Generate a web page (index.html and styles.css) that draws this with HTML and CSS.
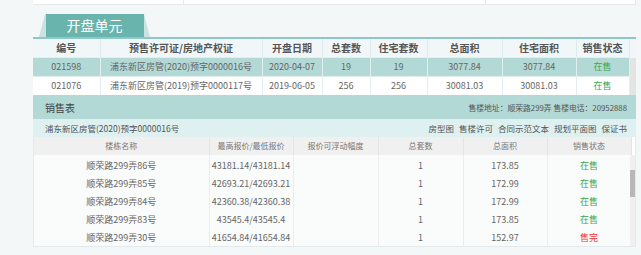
FILE: index.html
```html
<!DOCTYPE html>
<html lang="zh-CN">
<head>
  <meta charset="UTF-8">
  <title>开盘单元</title>
  <link rel="stylesheet" href="styles.css">
</head>
<body>
  <div class="page">
    <div class="topbox">
      <div class="cell c1"></div>
      <div class="cell c2"></div>
      <div class="cell c3"></div>
    </div>

    <div class="tabs">
      <div class="tab"><span>开盘单元</span></div>
    </div>

    <div class="units">
      <table class="unit-table">
        <colgroup>
          <col style="width:67px"><col style="width:162px"><col style="width:60px"><col style="width:48px">
          <col style="width:57px"><col style="width:75px"><col style="width:74px"><col style="width:53px"><col style="width:7px">
        </colgroup>
        <thead>
          <tr><th>编号</th><th>预售许可证/房地产权证</th><th>开盘日期</th><th>总套数</th><th>住宅套数</th><th>总面积</th><th>住宅面积</th><th>销售状态</th><th class="sb"></th></tr>
        </thead>
        <tbody>
          <tr class="active"><td>021598</td><td>浦东新区房管(2020)预字0000016号</td><td>2020-04-07</td><td>19</td><td>19</td><td>3077.84</td><td>3077.84</td><td class="on">在售</td><td class="sb"></td></tr>
          <tr><td>021076</td><td>浦东新区房管(2019)预字0000117号</td><td>2019-06-05</td><td>256</td><td>256</td><td>30081.03</td><td>30081.03</td><td class="on">在售</td><td class="sb"></td></tr>
        </tbody>
      </table>

      <div class="sales-head">
        <span class="title">销售表</span>
        <span class="info">售楼地址：顺荣路299弄 售楼电话：20952888</span>
      </div>
      <div class="sales-sub">
        <span>浦东新区房管(2020)预字0000016号</span>
        <span class="links"><a>房型图</a><a>售楼许可</a><a>合同示范文本</a><a>规划平面图</a><a>保证书</a></span>
      </div>

      <div class="sales-wrap">
        <table class="sales-table">
          <colgroup>
            <col style="width:175px"><col style="width:84px"><col style="width:85px"><col style="width:85px"><col style="width:84px"><col style="width:84px">
          </colgroup>
          <thead>
            <tr><th>楼栋名称</th><th>最高报价/最低报价</th><th>报价可浮动幅度</th><th>总套数</th><th>总面积</th><th>销售状态</th></tr>
          </thead>
          <tbody>
            <tr><td>顺荣路299弄86号</td><td>43181.14/43181.14</td><td></td><td>1</td><td>173.85</td><td class="on">在售</td></tr>
            <tr><td>顺荣路299弄85号</td><td>42693.21/42693.21</td><td></td><td>1</td><td>172.99</td><td class="on">在售</td></tr>
            <tr><td>顺荣路299弄84号</td><td>42360.38/42360.38</td><td></td><td>1</td><td>172.99</td><td class="on">在售</td></tr>
            <tr><td>顺荣路299弄83号</td><td>43545.4/43545.4</td><td></td><td>1</td><td>173.85</td><td class="on">在售</td></tr>
            <tr><td>顺荣路299弄30号</td><td>41654.84/41654.84</td><td></td><td>1</td><td>152.97</td><td class="off">售完</td></tr>
          </tbody>
        </table>
        <div class="scroll"><div class="thumb"></div></div>
      </div>
    </div>
  </div>
</body>
</html>
```

FILE: styles.css
```css
body { margin: 0; background: #f4f7f8; font-family: "Noto Sans CJK SC", "Noto Sans", sans-serif; color: #555; }
.page { width: 603px; margin-left: 33px; }

.topbox { display: flex; height: 4px; background: #fff; border-bottom: 1px solid #e4e8ea; }
.topbox .cell { border-right: 1px solid #e4e8ea; }
.topbox .c1 { width: 150px; }
.topbox .c2 { width: 301px; }
.topbox .c3 { flex: 1; }

.tabs { height: 23px; margin-top: 9px; padding-left: 6px; }
.tab { width: 111px; height: 23px; background: #c9e3e1; clip-path: polygon(6px 0, 105px 0, 111px 100%, 0 100%); display: flex; justify-content: center; }
.tab span { width: 98px; background: #6ab4ae; color: #fff; font-size: 14px; line-height: 23px; text-align: center; }

.units { border-top: 2px solid #8ec7c3; }

table { border-collapse: collapse; table-layout: fixed; width: 603px; }
.unit-table th { height: 18px; line-height: 18px; background: #f1f7f8; font-size: 10px; font-weight: bold; color: #555; border-right: 1px solid #dfeaec; padding: 0; }
.unit-table td { height: 18px; line-height: 18px; font-size: 9px; color: #666; text-align: center; padding: 0; border-right: 1px solid #e2eef0; border-top: 1px solid #e2eef0; background: #fff; white-space: nowrap; }
.unit-table tr.active td { background: #b3d9d6; }
.unit-table .sb { background: #e4e4e4 !important; border: none; }
.unit-table th.sb { background: #f1f7f8 !important; }
.on { color: #3aa84a !important; }
.off { color: #ee3333 !important; }

.sales-head { display: flex; justify-content: space-between; align-items: center; height: 24px; background: #b3d9d6; padding: 0 9px 0 12px; }
.sales-head .title { font-size: 10px; color: #444; }
.sales-head .info { font-size: 7.8px; color: #555; }
.sales-sub { display: flex; justify-content: space-between; align-items: center; height: 18px; background: #def0ef; padding: 0 9px 0 12px; font-size: 8.5px; color: #555; }
.links a { margin-left: 5px; }

.sales-wrap { position: relative; background: #fff; border: 1px solid #e2eaee; border-top: none; }
.sales-table { width: 597px; }
.sales-table th { height: 18px; line-height: 18px; background: #f0f0f0; font-size: 8px; font-weight: normal; color: #777; border-right: 1px solid #e4e4e4; padding: 0; }
.sales-table td { height: 16px; line-height: 16px; font-size: 9px; color: #666; text-align: center; padding: 2px 0 0; border-right: 1px solid #ececec; background: #fafbfb; white-space: nowrap; }
.sales-table tbody tr:first-child td { padding-top: 3px; }
.scroll { position: absolute; right: 0; top: 18px; bottom: 0; width: 5px; background: #f0f0f0; }
.thumb { margin-top: 15px; height: 27px; background: #b8b8b8; }
```
